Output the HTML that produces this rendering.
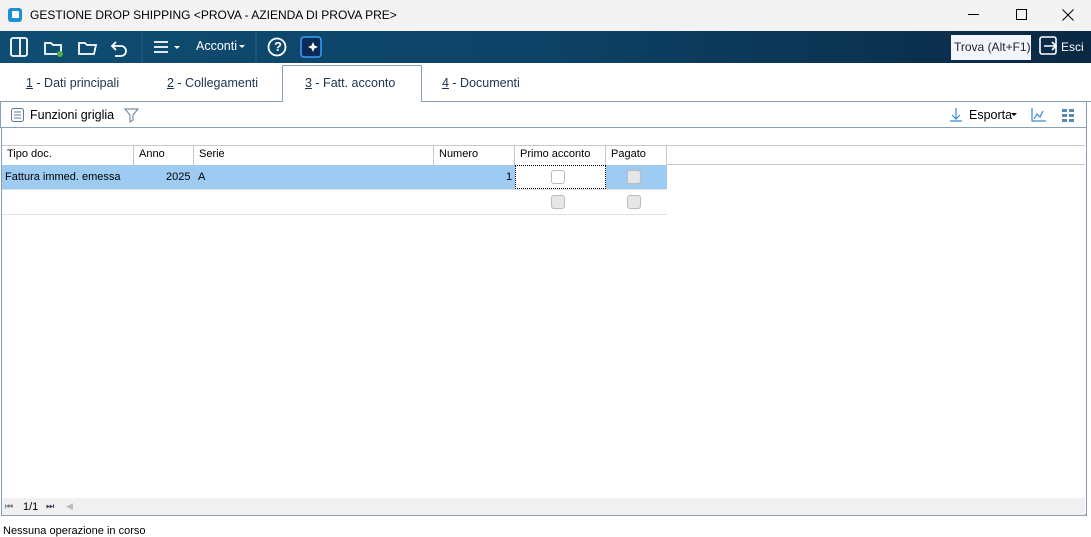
<!DOCTYPE html>
<html><head><style>
*{margin:0;padding:0;box-sizing:border-box}
body{width:1091px;height:536px;overflow:hidden;background:#fff;font-family:"Liberation Sans",sans-serif;position:relative;font-size:12px;color:#000}
.a{position:absolute}
#title{left:0;top:0;width:1091px;height:31px;background:#f3f3f3}
#tb{left:0;top:31px;width:1091px;height:32px;background:linear-gradient(90deg,#0f4d72 0%,#0d4266 50%,#0a2843 100%)}
.w{color:#fff}
.tab{top:76px;font-size:12.5px;color:#1a3550}
.hd{top:146px;height:19px;border-right:1px solid #c8c8c8;font-size:11px;padding:2px 0 0 5px;background:#fff}
.cb{width:14px;height:14px;border:1px solid #bbb;border-radius:3px;background:#e6e6e6}
</style></head><body>
<div class="a" id="title"></div>
<div class="a" style="left:8px;top:8px;width:14px;height:14px;background:#1e90d6;border-radius:3px"></div>
<div class="a" style="left:12px;top:11px;width:7px;height:7px;background:#fff;border-radius:1px"></div>
<div class="a" style="left:30px;top:8px;font-size:12px">GESTIONE DROP SHIPPING &lt;PROVA - AZIENDA DI PROVA PRE&gt;</div>
<div class="a" style="left:968px;top:14px;width:11px;height:1px;background:#000"></div>
<div class="a" style="left:1016px;top:9px;width:11px;height:11px;border:1px solid #000"></div>
<svg class="a" style="left:1062px;top:9px" width="12" height="12" stroke="#000" stroke-width="1"><path d="M0.5 0.5l11 11M11.5 0.5l-11 11"/></svg>
<div class="a" id="tb"></div>
<svg class="a" style="left:0;top:31px" width="340" height="32" fill="none" stroke="#fff" stroke-width="1.8">
<rect x="11" y="7" width="16" height="18" rx="2"/><line x1="20" y1="7" x2="20" y2="25"/>
<path d="M45 12h6l2 2h8v9H45z"/><circle cx="60" cy="23" r="3" fill="#4caf50" stroke="none"/>
<path d="M79 12h6l2 2h9l-2 9H79z"/>
<path d="M116 11l-4 4 4 4M112 15h9a5 5 0 010 10h-6"/>
<line x1="142" y1="0" x2="142" y2="32" stroke="#2c5f80" stroke-width="1"/>
<path d="M154 11h14M154 16h14M154 21h14"/><path d="M174 15l3 3 3-3z" fill="#fff" stroke="none"/>
<path d="M239 14l3 3 3-3z" fill="#fff" stroke="none"/>
<line x1="256" y1="0" x2="256" y2="32" stroke="#2c5f80" stroke-width="1"/>
<circle cx="277" cy="16" r="8.5"/>
<rect x="301" y="6" width="20" height="20" rx="3" fill="#0a2b55" stroke="#3aa0ff" stroke-width="1.5"/>
<path d="M313 11l1.5 3.5 3.5 1.5-3.5 1.5-1.5 3.5-1.5-3.5-3.5-1.5 3.5-1.5z" fill="#fff" stroke="none"/>
</svg>
<div class="a w" style="left:274px;top:39px;font-size:13px;font-weight:bold">?</div>
<div class="a w" style="left:196px;top:39px;font-size:12.5px">Acconti</div>
<div class="a" style="left:951px;top:35px;width:80px;height:25px;background:#f2f6fa;font-size:12px;padding:5px 0 0 3px;color:#223">Trova (Alt+F1)</div>
<svg class="a" style="left:1039px;top:36px" width="20" height="20" fill="none" stroke="#fff" stroke-width="1.6"><rect x="1" y="1" width="16" height="17" rx="2"/><path d="M5 10h12M13 6l4 4-4 4"/></svg>
<div class="a w" style="left:1061px;top:40px;font-size:12px">Esci</div>
<div class="a tab" style="left:26px"><u>1</u> - Dati principali</div>
<div class="a tab" style="left:167px"><u>2</u> - Collegamenti</div>
<div class="a" style="left:282px;top:65px;width:140px;height:37px;background:#fff;border:1px solid #8aa0b8;border-bottom:none"></div>
<div class="a" style="left:0;top:101px;width:282px;height:1px;background:#8aa0b8"></div>
<div class="a" style="left:422px;top:101px;width:669px;height:1px;background:#8aa0b8"></div>
<div class="a tab" style="left:305px"><u>3</u> - Fatt. acconto</div>
<div class="a tab" style="left:442px"><u>4</u> - Documenti</div>
<div class="a" style="left:0;top:102px;width:1087px;height:26px;border-right:1px solid #8aa0b8;border-bottom:1px solid #8aa0b8;border-left:1px solid #8aa0b8"></div>
<svg class="a" style="left:10px;top:107px" width="130" height="16" fill="none" stroke="#5a7a9a" stroke-width="1"><rect x="1.5" y="1.5" width="12" height="13" rx="2"/><path d="M4 5h7M4 8h7M4 11h7"/><path d="M115 2h13l-5 6v5l-3 2v-7z"/></svg>
<div class="a" style="left:30px;top:108px;font-size:12.5px">Funzioni griglia</div>
<svg class="a" style="left:948px;top:107px" width="130" height="16" fill="none" stroke="#3a8ad0" stroke-width="1.2"><path d="M8 1v11M4 8l4 4 4-4M2 14h12"/><path d="M84 1v13h14M86 12l3-5 3 3 3-6"/><path d="M63 6l3 3 3-3z" fill="#000" stroke="none"/><g fill="#5a8ab0" stroke="none"><rect x="114" y="2" width="5" height="3"/><rect x="121" y="2" width="5" height="3"/><rect x="114" y="7" width="5" height="3"/><rect x="121" y="7" width="5" height="3"/><rect x="114" y="12" width="5" height="3"/><rect x="121" y="12" width="5" height="3"/></g></svg>
<div class="a" style="left:969px;top:108px;font-size:12.5px">Esporta</div>
<div class="a" style="left:1px;top:128px;width:1086px;height:388px;border:1px solid #8aa0b8;border-top:none;border-bottom:2px solid #8aa0b8"></div>
<div class="a" style="left:2px;top:145px;width:1083px;height:20px;border-top:1px solid #c8c8c8;border-bottom:1px solid #c8c8c8"></div>
<div class="a hd" style="left:2px;width:132px">Tipo doc.</div>
<div class="a hd" style="left:134px;width:60px">Anno</div>
<div class="a hd" style="left:194px;width:240px">Serie</div>
<div class="a hd" style="left:434px;width:81px">Numero</div>
<div class="a hd" style="left:515px;width:91px">Primo acconto</div>
<div class="a hd" style="left:606px;width:61px">Pagato</div>
<div class="a" style="left:2px;top:165px;width:665px;height:24px;background:#9dcbf1"></div>
<div class="a" style="left:5px;top:171px;font-size:11px">Fattura immed. emessa</div>
<div class="a" style="left:166px;top:171px;font-size:11px">2025</div>
<div class="a" style="left:198px;top:171px;font-size:11px">A</div>
<div class="a" style="left:506px;top:171px;font-size:11px">1</div>
<div class="a" style="left:515px;top:165px;width:91px;height:24px;background:#fff;border:1px dotted #000"></div>
<div class="a cb" style="left:551px;top:170px;background:#fff"></div>
<div class="a cb" style="left:627px;top:170px"></div>
<div class="a" style="left:2px;top:189px;width:665px;height:1px;background:#e0e0e0"></div>
<div class="a" style="left:2px;top:214px;width:665px;height:1px;background:#e0e0e0"></div>
<div class="a cb" style="left:551px;top:195px"></div>
<div class="a cb" style="left:627px;top:195px"></div>
<div class="a" style="left:2px;top:498px;width:1083px;height:17px;background:#f0f0f0"></div>
<div class="a" style="left:5px;top:501px;font-size:9px;color:#667">⏮</div>
<div class="a" style="left:23px;top:501px;font-size:11px">1/1</div>
<div class="a" style="left:46px;top:501px;font-size:9px;color:#335">⏭</div>
<div class="a" style="left:66px;top:501px;font-size:9px;color:#bbb">◀</div>
<div class="a" style="left:3px;top:525px;font-size:11px">Nessuna operazione in corso</div>
</body></html>
